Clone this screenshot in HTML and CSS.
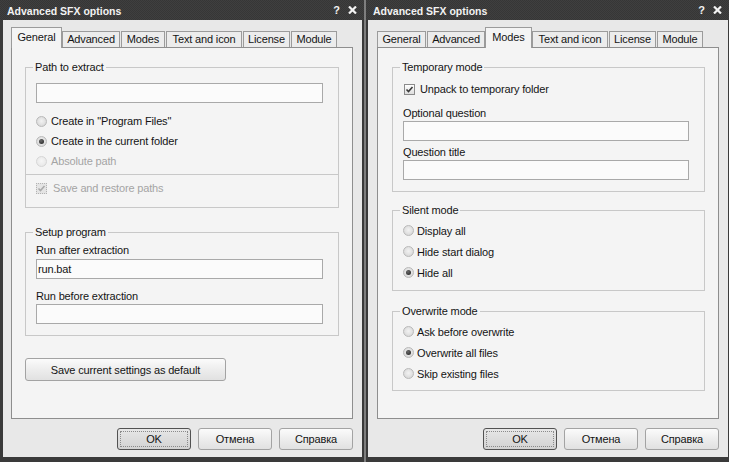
FILE: index.html
```html
<!DOCTYPE html>
<html>
<head>
<meta charset="utf-8">
<title>Advanced SFX options</title>
<link rel="stylesheet" href="styles.css">
</head>
<body>
<div class="screen">

  <div class="win win-left">
    <div class="titlebar">
      <span class="title">Advanced SFX options</span>
      <span class="tb-btns"><span class="help">?</span><svg class="close" width="9" height="8" viewBox="0 0 9 8"><path d="M1 0.5 L8 7.5 M8 0.5 L1 7.5" stroke="#f2f2f2" stroke-width="2.2" fill="none"/></svg></span>
    </div>
    <div class="client">
      <div class="tabs">
        <div class="tab t-general active">General</div>
        <div class="tab t-adv">Advanced</div>
        <div class="tab t-modes">Modes</div>
        <div class="tab t-text">Text and icon</div>
        <div class="tab t-lic">License</div>
        <div class="tab t-mod">Module</div>
      </div>
      <div class="panel">
        <fieldset class="group g-path">
          <legend>Path to extract</legend>
          <div class="edit e-path"></div>
          <div class="opts o-path">
            <div class="opt"><span class="radio"></span>Create in "Program Files"</div>
            <div class="opt"><span class="radio on"></span>Create in the current folder</div>
            <div class="opt disabled"><span class="radio dis"></span>Absolute path</div>
          </div>
          <div class="divider"></div>
          <div class="opt disabled o-save"><span class="check dis"><svg width="9" height="9" viewBox="0 0 9 9"><path d="M1.5 4.5 L3.5 6.5 L7.5 2" stroke="#a9a9a9" stroke-width="1.6" fill="none"/></svg></span>Save and restore paths</div>
        </fieldset>

        <fieldset class="group g-setup">
          <legend>Setup program</legend>
          <div class="label l-first">Run after extraction</div>
          <div class="edit e-lab">run.bat</div>
          <div class="label l-second">Run before extraction</div>
          <div class="edit e-lab2"></div>
        </fieldset>

        <div class="btn btn-save">Save current settings as default</div>
      </div>
      <div class="buttons">
        <div class="btn btn-default">OK</div>
        <div class="btn">Отмена</div>
        <div class="btn">Справка</div>
      </div>
    </div>
  </div>

  <div class="gap"></div>

  <div class="win win-right">
    <div class="titlebar">
      <span class="title">Advanced SFX options</span>
      <span class="tb-btns"><span class="help">?</span><svg class="close" width="9" height="8" viewBox="0 0 9 8"><path d="M1 0.5 L8 7.5 M8 0.5 L1 7.5" stroke="#f2f2f2" stroke-width="2.2" fill="none"/></svg></span>
    </div>
    <div class="client">
      <div class="tabs">
        <div class="tab t-general">General</div>
        <div class="tab t-adv">Advanced</div>
        <div class="tab t-modes active">Modes</div>
        <div class="tab t-text">Text and icon</div>
        <div class="tab t-lic">License</div>
        <div class="tab t-mod">Module</div>
      </div>
      <div class="panel">
        <fieldset class="group g-temp">
          <legend>Temporary mode</legend>
          <div class="opt o-unpack"><span class="check"><svg width="9" height="9" viewBox="0 0 9 9"><path d="M1.5 4.5 L3.5 6.5 L7.5 2" stroke="#3a3a3a" stroke-width="1.6" fill="none"/></svg></span>Unpack to temporary folder</div>
          <div class="label l-q1">Optional question</div>
          <div class="edit e-lab"></div>
          <div class="label l-q2">Question title</div>
          <div class="edit e-lab"></div>
        </fieldset>

        <fieldset class="group g-silent">
          <legend>Silent mode</legend>
          <div class="opts o-wide">
            <div class="opt tall"><span class="radio"></span>Display all</div>
            <div class="opt tall"><span class="radio"></span>Hide start dialog</div>
            <div class="opt tall"><span class="radio on"></span>Hide all</div>
          </div>
        </fieldset>

        <fieldset class="group g-over">
          <legend>Overwrite mode</legend>
          <div class="opts o-wide">
            <div class="opt tall"><span class="radio"></span>Ask before overwrite</div>
            <div class="opt tall"><span class="radio on"></span>Overwrite all files</div>
            <div class="opt tall"><span class="radio"></span>Skip existing files</div>
          </div>
        </fieldset>
      </div>
      <div class="buttons">
        <div class="btn btn-default">OK</div>
        <div class="btn">Отмена</div>
        <div class="btn">Справка</div>
      </div>
    </div>
  </div>

</div>
</body>
</html>
```

FILE: styles.css
```css
* { box-sizing: border-box; }
html, body { margin: 0; padding: 0; }
body {
  background: #2e2e2e;
  font-family: "Liberation Sans", Arial, sans-serif;
  font-size: 11px;
  letter-spacing: -0.15px;
  color: #141414;
}
.screen { display: flex; width: 729px; height: 462px; overflow: hidden; }
.gap { width: 2px; flex: none; background: #7e7e7e; }

.win { display: flex; flex-direction: column; height: 462px; flex: none; background: #3a3a3a; }
.win-left { width: 364px; }
.win-right { width: 363px; }

.titlebar {
  height: 20px;
  flex: none;
  display: flex;
  align-items: center;
  justify-content: space-between;
  padding: 0 7px;
  background: repeating-conic-gradient(#3f3f3f 0 25%, #363636 0 50%) 0 0 / 2px 2px;
  color: #f2f2f2;
  font-weight: bold;
  font-size: 10.5px;
  letter-spacing: 0;
}
.title { padding-top: 1px; }
.tb-btns { display: flex; align-items: center; gap: 8px; }
.help { font-size: 11px; font-weight: bold; }
.close { display: block; }

.client {
  flex: 1;
  display: flex;
  flex-direction: column;
  background: #e8e8e8;
  border-style: solid;
  border-color: #3a3a3a;
  border-width: 0 2px 5px 3px;
}
.win-right .client { border-width: 0 1px 5px 2px; }

/* tabs */
.tabs {
  display: flex;
  align-items: flex-end;
  height: 20px;
  margin-top: 7px;
  margin-left: 9px;
}
.tab {
  height: 16px;
  border: 1px solid #9b9b9b;
  border-bottom: none;
  background: #ececec;
  margin-right: 1px;
  display: flex;
  align-items: center;
  justify-content: center;
  padding-bottom: 1px;
  white-space: nowrap;
}
.t-general { width: 49px; }
.t-adv { width: 58px; }
.t-modes { width: 44px; }
.t-text { width: 76px; }
.t-lic { width: 47px; }
.t-mod { width: 46px; }
.tab.active {
  height: 21px;
  margin-bottom: -1px;
  margin-left: -1px;
  margin-right: 0;
  padding-bottom: 3px;
  background: #f4f4f4;
  position: relative;
  z-index: 1;
}
.t-general.active { width: 51px; }
.t-modes.active { width: 47px; }

.panel {
  height: 372px;
  width: 342px;
  margin-left: 8px;
  border: 1px solid #8e8e8e;
  background: #f4f4f4;
  padding: 0 13px;
}
.win-right .panel { margin-left: 9px; padding: 0 13px 0 14px; }

/* groups */
.group {
  margin: 0;
  min-width: 0;
  border: 1px solid #c8c8c8;
  padding: 0 14px 0 10px;
}
.group legend {
  padding: 0 2px;
  margin-left: -3px;
  line-height: 13px;
  font-size: 11px;
}
.g-path { margin-top: 13px; padding-bottom: 9px; }
.g-setup { margin-top: 18px; padding-bottom: 11px; }
.g-temp { margin-top: 13px; padding-bottom: 11px; }
.g-silent { margin-top: 12px; padding-bottom: 7px; }
.g-over { margin-top: 14px; padding-bottom: 6px; }

.edit {
  width: 287px;
  height: 20px;
  border: 1px solid #a9a9a9;
  background: #fbfbfb;
  line-height: 18px;
  padding-left: 1px;
}
.e-path { margin-top: 9px; }
.e-lab { margin-top: 2px; }
.e-lab2 { margin-top: 1px; }
.win-right .e-lab { margin-top: 1px; width: 286px; }

.label { line-height: 13px; }
.l-first { margin-top: 5px; }
.l-second { margin-top: 11px; }
.l-q1 { margin-top: 9px; }
.l-q2 { margin-top: 5px; }

.opts { display: flex; flex-direction: column; }
.o-path { margin-top: 8px; }
.o-wide { margin-top: 3px; }
.opt {
  height: 20px;
  display: flex;
  align-items: center;
  white-space: nowrap;
}
.opt.tall { height: 21px; }
.opt.disabled { color: #a4a4a4; }
.o-save { margin-top: 3px; }
.o-unpack { height: 18px; margin-top: 6px; }

.divider {
  height: 1px;
  background: #c8c8c8;
  margin: 3px -14px 0 -10px;
}

.radio {
  width: 11px;
  height: 11px;
  border-radius: 50%;
  border: 1px solid #b9b9b9;
  background: radial-gradient(circle at 50% 45%, #f2f2f2 0, #e4e4e4 45%, #cfcfcf 100%);
  margin-right: 4px;
  display: flex;
  align-items: center;
  justify-content: center;
  flex: none;
}
.win-right .radio { margin-right: 3px; }
.radio.on::after {
  content: "";
  width: 5px;
  height: 5px;
  border-radius: 50%;
  background: radial-gradient(circle at 40% 35%, #6a6a6a, #1c1c1c);
}
.radio.dis {
  border-color: #d6d6d6;
  background: radial-gradient(circle at 50% 45%, #f6f6f6, #e4e4e4);
}

.check {
  width: 11px;
  height: 11px;
  border: 1px solid #8b8b8b;
  background: linear-gradient(#ffffff, #dedede);
  margin-left: 1px;
  margin-right: 5px;
  display: flex;
  align-items: center;
  justify-content: center;
  flex: none;
}
.check svg { display: block; }
.check.dis {
  margin-left: 0;
  margin-right: 6px;
  border: 1px dotted #b2b2b2;
  background: #e4e4e4;
}

/* buttons */
.btn {
  height: 22px;
  width: 74px;
  border: 1px solid #a3a3a3;
  border-radius: 3px;
  background: linear-gradient(#fbfbfb, #ededed 50%, #e1e1e1);
  display: flex;
  align-items: center;
  justify-content: center;
  white-space: nowrap;
}
.btn-default {
  border-color: #525252;
  background: linear-gradient(#e7e7e7, #dcdcdc 50%, #d3d3d3);
  outline: 1px dotted #8a8a8a;
  outline-offset: -4px;
}
.btn-save {
  width: 201px;
  height: 23px;
  margin-top: 22px;
}
.buttons {
  display: flex;
  justify-content: flex-end;
  gap: 7px;
  margin-top: 9px;
  padding-right: 9px;
}
.win-right .buttons { padding-right: 9px; }
```
